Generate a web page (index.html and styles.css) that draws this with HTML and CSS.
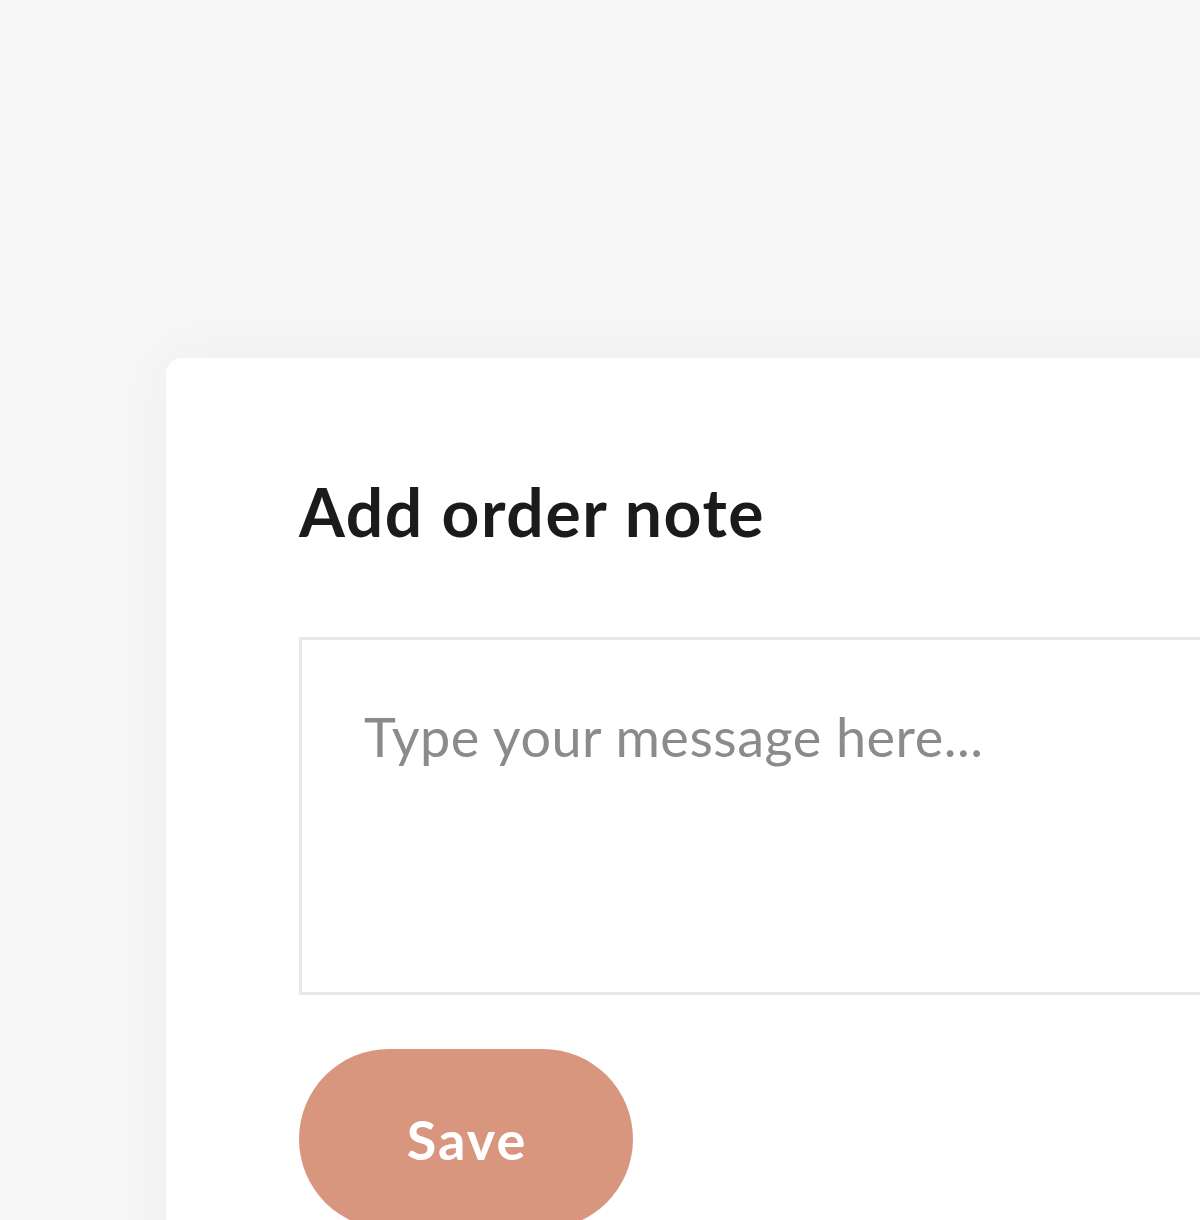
FILE: index.html
```html
<!DOCTYPE html>
<html lang="en">
<head>
<meta charset="utf-8">
<title>Add order note</title>
<link rel="stylesheet" href="styles.css">
</head>
<body>
<main class="page">
  <section class="card">
    <h1 class="card-title">Add order note</h1>
    <textarea class="note-input" placeholder="Type your message here..."></textarea>
    <button class="save-btn" type="button">Save</button>
  </section>
</main>
</body>
</html>
```
FILE: styles.css
```css
html, body {
  margin: 0;
  padding: 0;
  background: #f6f6f6;
  overflow: hidden;
  height: 1220px;
}

.page {
  padding: 358px 0 0 166px;
  font-family: Lato, "Noto Sans", sans-serif;
}

.card {
  width: 1200px;
  min-height: 1000px;
  background: #ffffff;
  border-radius: 16px;
  box-shadow: 0 0 60px rgba(0, 0, 0, 0.035);
  padding: 114px 0 0 133px;
  box-sizing: border-box;
  display: flex;
  flex-direction: column;
  align-items: flex-start;
}

.card-title {
  margin: 0;
  font-size: 66px;
  line-height: 80px;
  font-weight: 700;
  color: #1b1b1b;
  letter-spacing: 1.6px;
}

.note-input {
  margin-top: 85px;
  width: 1000px;
  height: 358px;
  box-sizing: border-box;
  border: 3px solid #e7e7e7;
  border-radius: 0;
  padding: 61px 62px;
  font-family: Lato, "Noto Sans", sans-serif;
  font-size: 54px;
  line-height: 72px;
  letter-spacing: 0.5px;
  color: #333;
  resize: none;
  outline: none;
  background: #fff;
}

.note-input::placeholder {
  color: #8b8b8b;
  opacity: 1;
}

.save-btn {
  margin-top: 54px;
  width: 334px;
  height: 180px;
  border: none;
  border-radius: 90px;
  background: #d8967f;
  color: #ffffff;
  font-family: Lato, "Noto Sans", sans-serif;
  font-size: 54px;
  font-weight: 700;
  letter-spacing: 2px;
  text-indent: 2px;
  cursor: pointer;
  padding: 0;
}
```
